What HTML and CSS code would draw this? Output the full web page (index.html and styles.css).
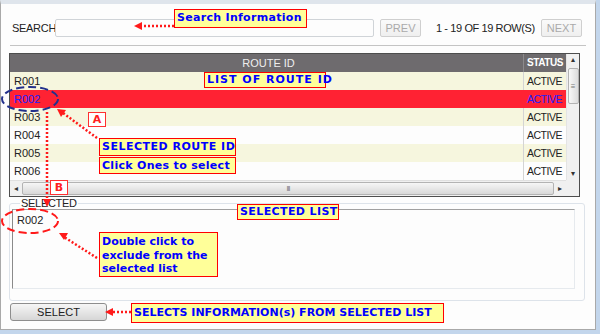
FILE: index.html
```html
<!DOCTYPE html>
<html lang="en">
<head>
  <meta charset="UTF-8">
  <title>Route Selection</title>
  <link rel="stylesheet" href="styles.css">
</head>
<body>
<div class="page">
  <div class="window">

    <div class="search-row">
      <label class="search-label" for="search">SEARCH</label>
      <input class="search-input" type="text" id="search">
      <button class="pager-btn" disabled>PREV</button>
      <span class="row-count">1 - 19 OF 19 ROW(S)</span>
      <button class="pager-btn next" disabled>NEXT</button>
    </div>

    <hr class="divider">

    <div class="grid">
      <div class="grid-main">
        <div class="grid-head">
          <div class="col-id">ROUTE ID</div>
          <div class="col-status">STATUS</div>
        </div>
        <div class="grid-row beige"><div class="col-id">R001</div><div class="col-status">ACTIVE</div></div>
        <div class="grid-row picked"><div class="col-id">R002</div><div class="col-status">ACTIVE</div></div>
        <div class="grid-row beige"><div class="col-id">R003</div><div class="col-status">ACTIVE</div></div>
        <div class="grid-row"><div class="col-id">R004</div><div class="col-status">ACTIVE</div></div>
        <div class="grid-row beige"><div class="col-id">R005</div><div class="col-status">ACTIVE</div></div>
        <div class="grid-row"><div class="col-id">R006</div><div class="col-status">ACTIVE</div></div>
      </div>
      <div class="vscroll">
        <span class="arrow">&#9652;</span>
        <div class="vthumb"><span class="grip">&#8801;</span></div>
        <span class="vspace"></span>
        <span class="arrow">&#9662;</span>
      </div>
      <div class="hscroll">
        <span class="arrow">&#9666;</span>
        <div class="hthumb"><span class="grip">III</span></div>
        <span class="arrow">&#9656;</span>
      </div>
      <div class="corner"></div>
    </div>

    <fieldset class="selected-box">
      <legend>SELECTED</legend>
      <div class="selected-list">
        <div class="selected-item">R002</div>
      </div>
    </fieldset>

    <button class="select-btn">SELECT</button>
  </div>

  <!-- help annotations drawn over the form -->
  <svg class="marks" width="600" height="334" viewBox="0 0 600 334">
    <g class="dots">
      <line x1="174" y1="26" x2="141" y2="26"/>
      <line x1="97" y1="138" x2="63" y2="113"/>
      <line x1="47" y1="112" x2="47" y2="200"/>
      <line x1="97" y1="258" x2="64" y2="237"/>
      <line x1="131" y1="312" x2="112" y2="312"/>
    </g>
    <g class="heads">
      <polygon points="134,26 142,22 142,30"/>
      <polygon points="57,109 66,110 61,117"/>
      <polygon points="47,207 43,199 51,199"/>
      <polygon points="59,233 68,233 64,240"/>
      <polygon points="105,312 113,308 113,316"/>
    </g>
    <ellipse class="ring-blue" cx="30" cy="99" rx="28" ry="12"/>
    <ellipse class="ring-red" cx="30" cy="221" rx="28" ry="12"/>
  </svg>

  <div class="note note-search">Search Information</div>
  <div class="note note-list">LIST OF ROUTE ID</div>
  <div class="tag tag-a">A</div>
  <div class="note note-route">SELECTED ROUTE ID</div>
  <div class="note note-click">Click Ones to select</div>
  <div class="tag tag-b">B</div>
  <div class="note note-sel">SELECTED LIST</div>
  <div class="note note-dbl">Double click to<br>exclude from the<br>selected list</div>
  <div class="note note-btn">SELECTS INFORMATION(s) FROM SELECTED LIST</div>
</div>
</body>
</html>
```

FILE: styles.css
```css
* {
  box-sizing: border-box;
}

body {
  margin: 0;
  background: #c3d6ec;
  font-family: 'Liberation Sans', Arial, sans-serif;
  font-size: 11px;
  color: #222;
}

.page {
  position: relative;
  width: 600px;
  height: 334px;
}

.window {
  width: 596px;
  height: 330px;
  background: #fdfdfd;
  border-top: 4px solid #dfe5ec;
  border-left: 1px solid #a9a9a9;
  border-right: 1px solid #a9a9a9;
  border-bottom: 1px solid #a9a9a9;
  padding: 15px 0 0 8px;
}

/* search bar */
.search-row {
  display: flex;
  align-items: center;
  height: 18px;
}

.search-label {
  margin-left: 3px;
  width: 43px;
  letter-spacing: -0.3px;
}

.search-input {
  width: 319px;
  height: 18px;
  border: 1px solid #d0d4d8;
  border-radius: 2px;
  background: #fdfdfd;
  outline: none;
}

.pager-btn {
  height: 18px;
  width: 41px;
  margin-left: 6px;
  padding: 0;
  font-family: inherit;
  font-size: 11px;
  color: #aaa;
  background: linear-gradient(#fafafa, #efefef);
  border: 1px solid #cfcfcf;
  border-radius: 2px;
}

.pager-btn.next {
  margin-left: 0;
}

.row-count {
  width: 120px;
  padding-left: 15px;
  white-space: nowrap;
  letter-spacing: -0.4px;
}

.divider {
  margin: 8px 0 0 1px;
  width: 576px;
  border: 0;
  border-top: 1px solid #c4c4c4;
  height: 0;
}

/* route grid */
.grid {
  margin-top: 7px;
  width: 571px;
  border: 1px solid #4d4d4d;
  display: grid;
  grid-template-columns: 556px 13px;
  grid-template-rows: 126px 16px;
}

.grid-head,
.grid-row {
  display: flex;
  height: 18px;
  line-height: 18px;
}

.grid-head {
  background: #6e6b6e;
  color: #fff;
}

.grid-head .col-id {
  text-align: center;
  color: #eee;
}

.grid-head .col-status {
  font-weight: bold;
  font-size: 10px;
  border-left: 1px solid #8c8a8c;
  letter-spacing: -0.4px;
}

.col-id {
  width: 513px;
  padding-left: 4px;
}

.col-status {
  width: 43px;
  padding-left: 3px;
  border-left: 1px solid #d4d4d4;
  white-space: nowrap;
  font-size: 10.5px;
  letter-spacing: -0.5px;
}

.grid-row.beige {
  background: #f6f6de;
}

.grid-row.picked {
  background: #ff2233;
  color: #2020ff;
}

.grid-row.picked .col-status {
  border-left-color: #ff2233;
}

.vscroll {
  grid-row: 1;
  grid-column: 2;
  background: #f0f0f0;
  border-left: 1px solid #e4e4e4;
  display: flex;
  flex-direction: column;
  align-items: center;
}

.arrow {
  font-size: 8px;
  color: #333;
  line-height: 12px;
}

.vthumb {
  width: 11px;
  height: 36px;
  margin-top: 2px;
  background: linear-gradient(to right, #f8f8f8, #dcdcdc);
  border: 1px solid #b3b3b3;
  border-radius: 2px;
  display: flex;
  align-items: center;
  justify-content: center;
}

.grip {
  font-size: 8px;
  color: #777;
}

.vspace {
  flex: 1;
}

.hscroll {
  grid-row: 2;
  grid-column: 1;
  background: #f0f0f0;
  border-top: 1px solid #e0e0e0;
  display: flex;
  align-items: center;
  padding: 0 4px;
  gap: 4px;
}

.hthumb {
  flex: 1;
  height: 13px;
  background: linear-gradient(#f6f6f6, #d8d8d8);
  border: 1px solid #b3b3b3;
  border-radius: 2px;
  display: flex;
  align-items: center;
  justify-content: center;
}

.hthumb .grip {
  font-size: 7px;
  letter-spacing: -1px;
}

.corner {
  grid-row: 2;
  grid-column: 2;
  background: #f0f0f0;
}

/* selected list */
.selected-box {
  margin: 0;
  width: 576px;
  height: 104px;
  padding: 0 9px 10px 2px;
  border: 1px solid #dde3ea;
  border-radius: 3px;
}

.selected-box legend {
  margin-left: 8px;
  padding: 0 1px;
  line-height: 12px;
  font-size: 11px;
  letter-spacing: -0.3px;
}

.selected-list {
  height: 80px;
  border: 1px solid #e6eaee;
  border-top-color: #a0a0a0;
  border-left-color: #8a8a8a;
  padding: 3px 4px;
}

.selected-item {
  line-height: 14px;
}

.select-btn {
  display: block;
  margin: 2px 0 0 1px;
  width: 97px;
  height: 18px;
  padding: 0;
  font-family: inherit;
  font-size: 11px;
  color: #222;
  background: linear-gradient(#f6f6f6, #d6d6d6);
  border: 1px solid #8d8d8d;
  border-radius: 3px;
}

/* annotations */
.marks {
  position: absolute;
  left: 0;
  top: 0;
  pointer-events: none;
}

.dots line {
  stroke: #ff1a1a;
  stroke-width: 2.5;
  stroke-dasharray: 2 2;
}

.heads polygon {
  fill: #ff1a1a;
}

.ring-blue {
  fill: none;
  stroke: #22308c;
  stroke-width: 2;
  stroke-dasharray: 8 4;
}

.ring-red {
  fill: none;
  stroke: #ff1a1a;
  stroke-width: 2;
  stroke-dasharray: 8 4;
}

.note {
  position: absolute;
  background: #ffff99;
  border: 1px solid #ff0000;
  color: #0000ff;
  font-family: 'DejaVu Sans', Verdana, sans-serif;
  font-weight: bold;
  font-size: 11px;
  line-height: 16px;
  padding-left: 2px;
  white-space: nowrap;
}

.note-search { left: 174px; top: 9px; width: 133px; height: 19px; letter-spacing: 0.3px; }
.note-list { left: 204px; top: 72px; width: 122px; height: 16px; line-height: 14px; letter-spacing: 1px; }
.note-route { left: 99px; top: 138px; width: 137px; height: 18px; letter-spacing: 0.5px; }
.note-click { left: 99px; top: 157px; width: 137px; height: 17px; letter-spacing: 0.3px; }
.note-sel { left: 237px; top: 204px; width: 102px; height: 16px; line-height: 14px; letter-spacing: 0.4px; }
.note-dbl { left: 99px; top: 232px; width: 119px; height: 45px; line-height: 13.5px; padding-top: 2px; }
.note-btn { left: 131px; top: 303px; width: 313px; height: 20px; line-height: 18px; }

.tag {
  position: absolute;
  background: #fff;
  border: 1px solid #ff3030;
  color: #ff2020;
  font-family: 'DejaVu Sans', Verdana, sans-serif;
  font-weight: bold;
  font-size: 11px;
  text-align: center;
  line-height: 13px;
}

.tag-a { left: 88px; top: 112px; width: 18px; height: 15px; }
.tag-b { left: 50px; top: 180px; width: 18px; height: 15px; }
```
